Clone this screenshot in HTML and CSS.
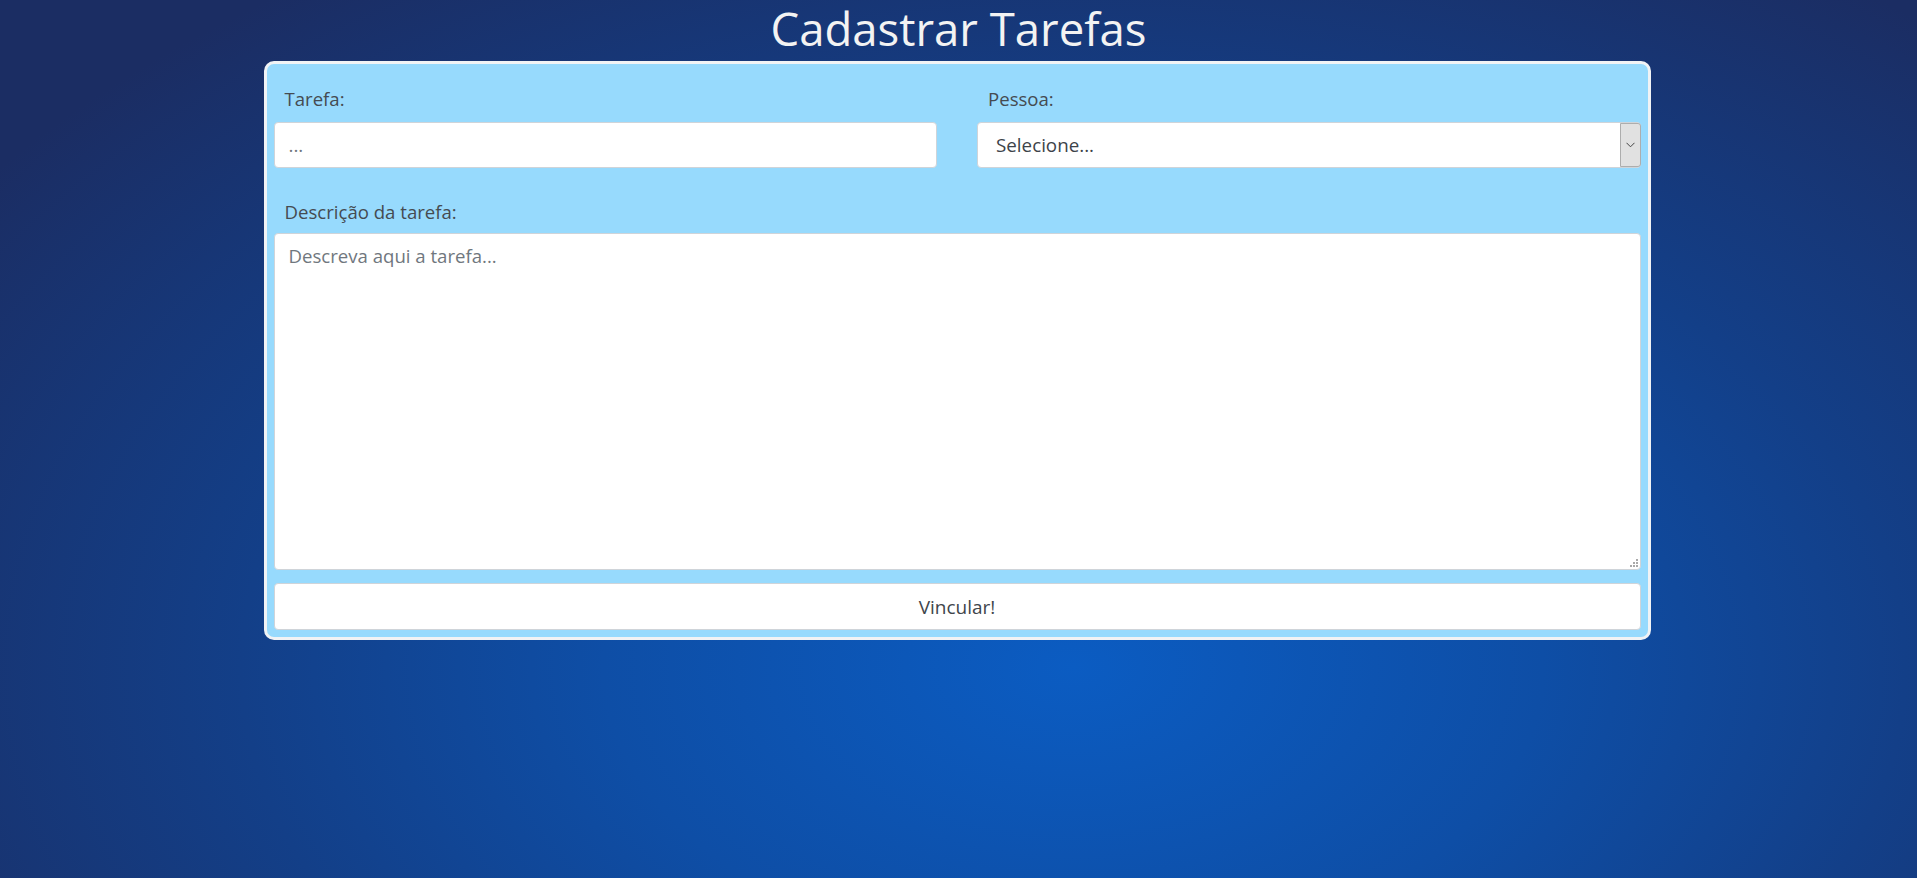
FILE: index.html
```html
<!DOCTYPE html>
<html lang="pt-BR">
<head>
<meta charset="utf-8">
<title>Cadastrar Tarefas</title>
<link rel="stylesheet" href="styles.css">
</head>
<body>
<h1 class="title">Cadastrar Tarefas</h1>
<form class="card">
  <div class="row">
    <div class="field">
      <label class="label" for="tarefa">Tarefa:</label>
      <input class="control input" id="tarefa" type="text" placeholder="...">
    </div>
    <div class="field">
      <label class="label" for="pessoa">Pessoa:</label>
      <div class="select-wrap">
        <select class="control select" id="pessoa">
          <option>Selecione...</option>
        </select>
        <span class="select-arrow">
          <svg width="9" height="6" viewBox="0 0 9 6"><path d="M0.5 0.8 L4.5 4.8 L8.5 0.8" fill="none" stroke="#444" stroke-width="1"/></svg>
        </span>
      </div>
    </div>
  </div>
  <div class="field field-desc">
    <label class="label label-desc" for="descricao">Descrição da tarefa:</label>
    <div class="textarea-wrap">
      <textarea class="control textarea" id="descricao" placeholder="Descreva aqui a tarefa..."></textarea>
      <span class="grip">
        <svg width="8" height="8" viewBox="0 0 8 8"><g fill="#a9a9a9"><rect x="6" y="0" width="2" height="2"/><rect x="3" y="3" width="2" height="2"/><rect x="6" y="3" width="2" height="2"/><rect x="0" y="6" width="2" height="2"/><rect x="3" y="6" width="2" height="2"/><rect x="6" y="6" width="2" height="2"/></g></svg>
      </span>
    </div>
  </div>
  <button class="btn" type="button">Vincular!</button>
</form>
</body>
</html>
```
FILE: styles.css
```css
html, body {
  margin: 0;
  padding: 0;
}

body {
  min-height: 878px;
  font-family: "Open Sans", "Noto Sans", "DejaVu Sans", sans-serif;
  background: radial-gradient(ellipse 70% 95% at 56% 76%, #0b5cc2 0%, #0e4ea6 35%, #133f88 62%, #1b2d63 100%);
  background-attachment: fixed;
}

.title {
  margin: 0;
  font-size: 45.5px;
  line-height: 56px;
  font-weight: 400;
  color: #f3f3f3;
  text-align: center;
}

.card {
  box-sizing: border-box;
  width: 1387px;
  margin: 5px 0 0 calc(50% - 695px);
  padding: 7px;
  background: #97dafd;
  border: 3px solid #f1f3f5;
  border-radius: 10px;
  display: flex;
  flex-direction: column;
}

.row {
  display: grid;
  grid-template-columns: 1fr 1fr;
  column-gap: 40px;
}

.field {
  display: flex;
  flex-direction: column;
}

.label {
  display: block;
  padding: 14px 11px 10px;
  font-size: 18.6px;
  line-height: 27px;
  color: #454b51;
}

.field-desc .label-desc {
  padding-top: 30px;
  padding-bottom: 8px;
}

.control {
  box-sizing: border-box;
  width: 100%;
  margin: 0;
  font-family: inherit;
  font-size: 18.8px;
  color: #444a50;
  background: #ffffff;
  border: 1px solid #cfd4d9;
  border-radius: 4px;
  outline: none;
}

.input {
  height: 46px;
  padding: 0 14px;
}

.input::placeholder {
  color: #70777e;
}

.select-wrap {
  position: relative;
}

.select {
  height: 46px;
  padding: 0 30px 0 18px;
  appearance: none;
  -webkit-appearance: none;
  color: #3d4349;
}

.select-arrow {
  position: absolute;
  top: 1px;
  right: 0;
  bottom: 1px;
  width: 21px;
  box-sizing: border-box;
  background: #e1e1e1;
  border: 1px solid #adadad;
  border-radius: 0 3px 3px 0;
  display: flex;
  align-items: center;
  justify-content: center;
}

.textarea-wrap {
  position: relative;
}

.textarea {
  display: block;
  height: 337px;
  padding: 9px 14px;
  font-size: 18.6px;
  line-height: 26.4px;
  resize: none;
}

.textarea::placeholder {
  color: #70777e;
}

.grip {
  position: absolute;
  right: 3px;
  bottom: 3px;
  width: 8px;
  height: 8px;
  display: flex;
}

.btn {
  box-sizing: border-box;
  width: 100%;
  height: 47px;
  margin-top: 13px;
  font-family: inherit;
  font-size: 19px;
  color: #3f454b;
  background: #ffffff;
  border: 1px solid #cfd4d9;
  border-radius: 4px;
  cursor: pointer;
}
```
